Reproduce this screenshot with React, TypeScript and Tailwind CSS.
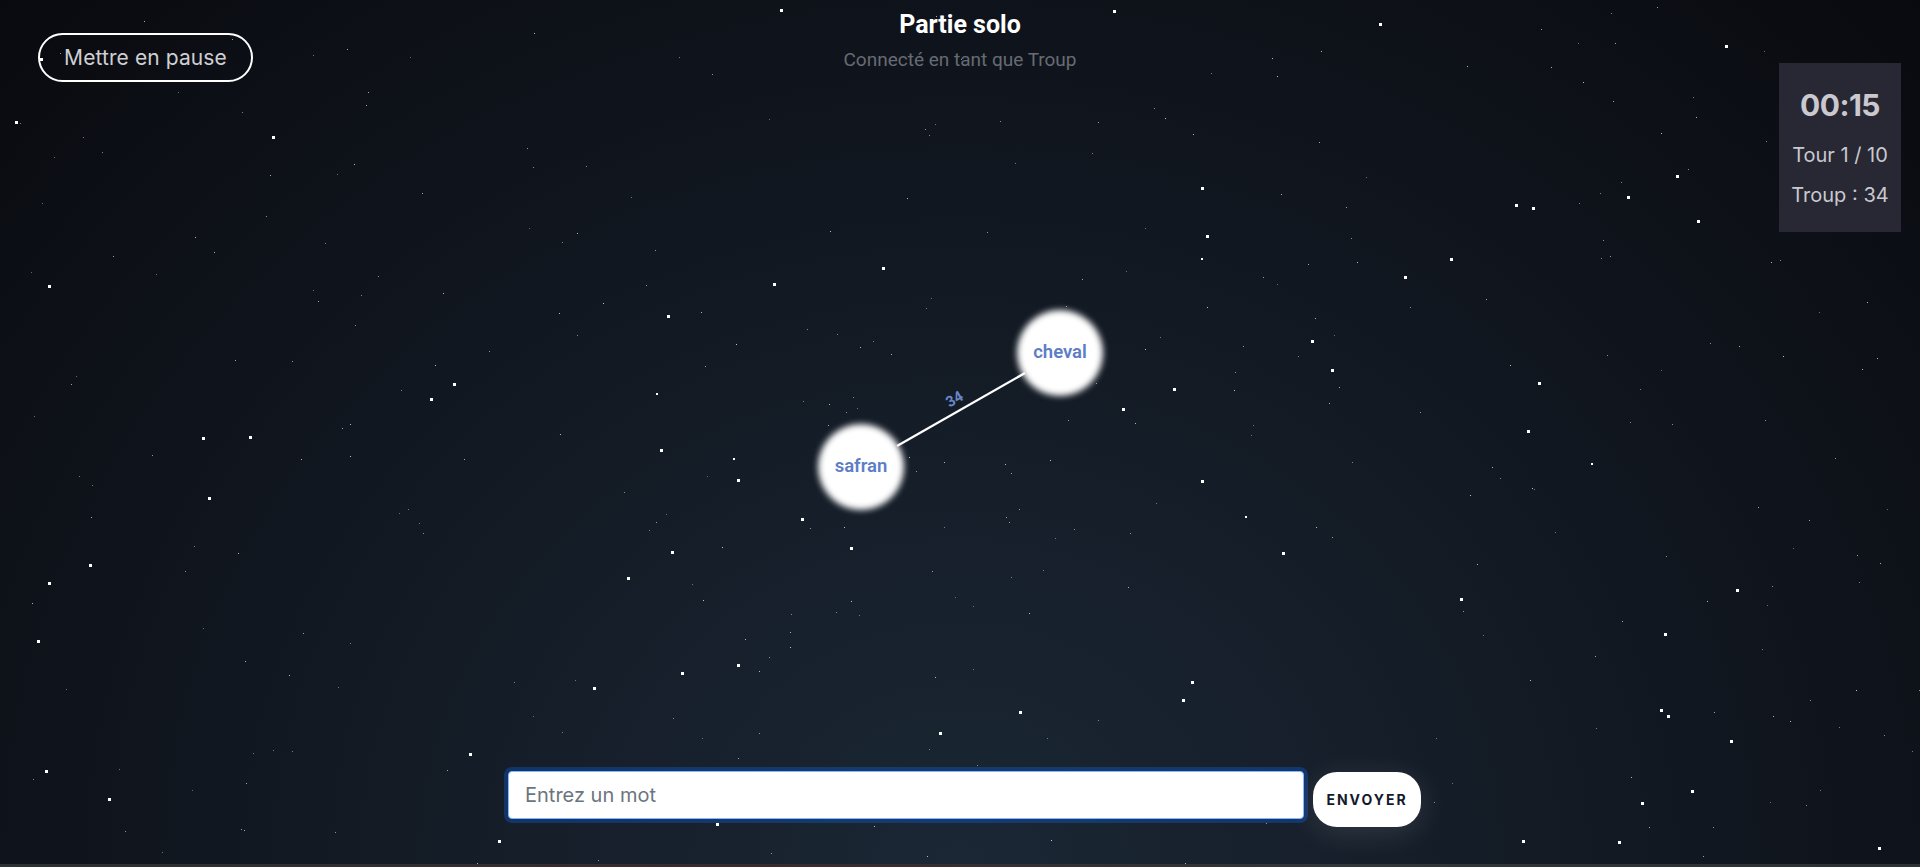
import React from 'react';

// bright stars, taken from the reference (coords on a 1568 wide grid)
const BRIGHT: [number, number, number][] = [
  [637, 7, 3], [909, 8, 3], [1126, 19, 3], [1409, 37, 3], [12, 99, 3], [222, 111, 3],
  [981, 153, 3], [1369, 143, 3], [1329, 160, 3], [1237, 167, 3], [1251, 169, 3],
  [1386, 180, 3], [985, 192, 3], [1184, 211, 3], [981, 211, 2], [720, 218, 3],
  [1147, 225, 3], [631, 231, 3], [39, 233, 3], [545, 257, 3], [1071, 278, 3],
  [1087, 301, 3], [1256, 312, 3], [370, 313, 3], [351, 325, 3], [536, 321, 2],
  [958, 317, 3], [916, 333, 3], [165, 357, 3], [203, 356, 3], [1247, 351, 3],
  [539, 367, 3], [599, 374, 2], [602, 391, 3], [981, 392, 3], [1299, 378, 2],
  [170, 406, 3], [654, 423, 3], [1017, 421, 2], [694, 447, 3], [548, 450, 3],
  [1047, 451, 3], [73, 461, 3], [39, 475, 3], [512, 471, 3], [1192, 488, 3],
  [1418, 481, 3], [30, 523, 3], [1359, 517, 3], [602, 542, 3], [556, 549, 3],
  [484, 561, 3], [973, 556, 3], [965, 571, 3], [1356, 579, 3], [1361, 584, 3],
  [832, 581, 3], [767, 598, 3], [1413, 604, 3], [383, 615, 3], [37, 629, 3],
  [1340, 655, 3], [1381, 645, 3], [88, 652, 3], [585, 672, 3], [1243, 686, 3],
  [1321, 687, 3], [1534, 692, 3], [407, 686, 3], [33, 47, 3],
];

function mulberry32(seed: number) {
  return () => {
    seed |= 0;
    seed = (seed + 0x6d2b79f5) | 0;
    let t = Math.imul(seed ^ (seed >>> 15), 1 | seed);
    t = (t + Math.imul(t ^ (t >>> 7), 61 | t)) ^ t;
    return ((t ^ (t >>> 14)) >>> 0) / 4294967296;
  };
}

const rand = mulberry32(1337);
const FAINT = Array.from({ length: 320 }, () => ({
  x: Math.floor(rand() * 1920),
  y: Math.floor(rand() * 864),
  o: 0.35 + rand() * 0.4,
}));

const K = 1920 / 1568;

function Stars() {
  return (
    <div className="absolute inset-0 overflow-hidden pointer-events-none">
      {FAINT.map((s, i) => (
        <span
          key={'f' + i}
          className="absolute w-px h-px bg-white"
          style={{ left: s.x, top: s.y, opacity: s.o }}
        />
      ))}
      {BRIGHT.map(([x, y, r], i) => (
        <span
          key={'b' + i}
          className="absolute bg-white"
          style={{ left: Math.round(x * K), top: Math.round(y * K), width: r, height: r }}
        />
      ))}
    </div>
  );
}

function Node({ x, y, label }: { x: number; y: number; label: string }) {
  return (
    <div
      className="absolute w-[86px] h-[86px] -ml-[43px] -mt-[43px] flex items-center justify-center"
      style={{ left: x, top: y }}
    >
      {/* soft blurred disc */}
      <div className="absolute inset-0 rounded-full bg-white blur-[3px]" />
      <span className="relative text-[18.5px] font-semibold text-[#5d7dc6] font-['Roboto',sans-serif]">{label}</span>
    </div>
  );
}

export default function App() {
  return (
    <div className="relative w-full h-[867px] overflow-hidden bg-[radial-gradient(ellipse_at_bottom,#1B2735_0%,#090A0F_100%)] font-['Inter',sans-serif]">
      <Stars />
      <div className="relative flex flex-col h-[864px]">
        {/* header */}
        <div className="grid grid-cols-[1fr_auto_1fr] items-start h-[232px]">
          <div className="pl-[38px] pt-[33px]">
            <button
              type="button"
              className="h-[49px] w-[215px] rounded-full border-2 border-white text-[#cfcfd4] text-[21px] tracking-[0.1px]"
            >
              Mettre en pause
            </button>
          </div>
          <div className="flex flex-col items-center pt-[8px] font-['Roboto',sans-serif]">
            <h1 className="text-[25px] font-bold text-white leading-[34px]">Partie solo</h1>
            <p className="text-[19px] text-[#676b72] leading-[26px] mt-[5px]">Connecté en tant que Troup</p>
          </div>
          <div className="flex justify-end pr-[19px] pt-[63px]">
            <div className="w-[122px] h-[169px] bg-[#272833] flex flex-col items-center text-[#c9c9cf] pt-[22px]">
              <div className="text-[30px] font-bold leading-[40px] tracking-[-0.5px]">00:15</div>
              <div className="text-[20px] leading-[26px] mt-[17px]">Tour 1 / 10</div>
              <div className="text-[20px] leading-[26px] mt-[14px]">Troup : 34</div>
            </div>
          </div>
        </div>

        {/* graph */}
        <div className="relative flex-1">
          <svg className="absolute inset-0 w-full h-full">
            <line x1="897" y1="214" x2="1025" y2="141" stroke="white" strokeWidth="2.2" />
            <text
              x="955"
              y="172"
              fill="#6b86c8"
              fontSize="15"
              fontWeight="700"
              fontFamily="Roboto, sans-serif"
              textAnchor="middle"
              transform="rotate(-30 955 168)"
            >
              34
            </text>
          </svg>
          <Node x={1060} y={121} label="cheval" />
          <Node x={861} y={235} label="safran" />
        </div>

        {/* word form */}
        <div className="flex justify-center items-start gap-[9px] pl-[9px] pb-[37px]">
          <input
            type="text"
            placeholder="Entrez un mot"
            className="w-[796px] h-[48px] bg-white rounded-[4px] border border-[#86b7fe] shadow-[0_0_0_4px_rgba(13,110,253,0.3)] px-[16px] text-[20px] text-[#212529] placeholder:text-[#6c757d] outline-none"
          />
          <button
            type="button"
            className="mt-px w-[108px] h-[55px] rounded-[24px] bg-white text-[#141a2a] text-[14px] font-bold tracking-[2px] shadow-[0_6px_30px_rgba(255,255,255,0.12)]"
          >
            ENVOYER
          </button>
        </div>
      </div>
      <div className="h-[3px] bg-[linear-gradient(90deg,#2b3134,#3a2a2e_40%,#30363a_70%,#2b3134)]" />
    </div>
  );
}
